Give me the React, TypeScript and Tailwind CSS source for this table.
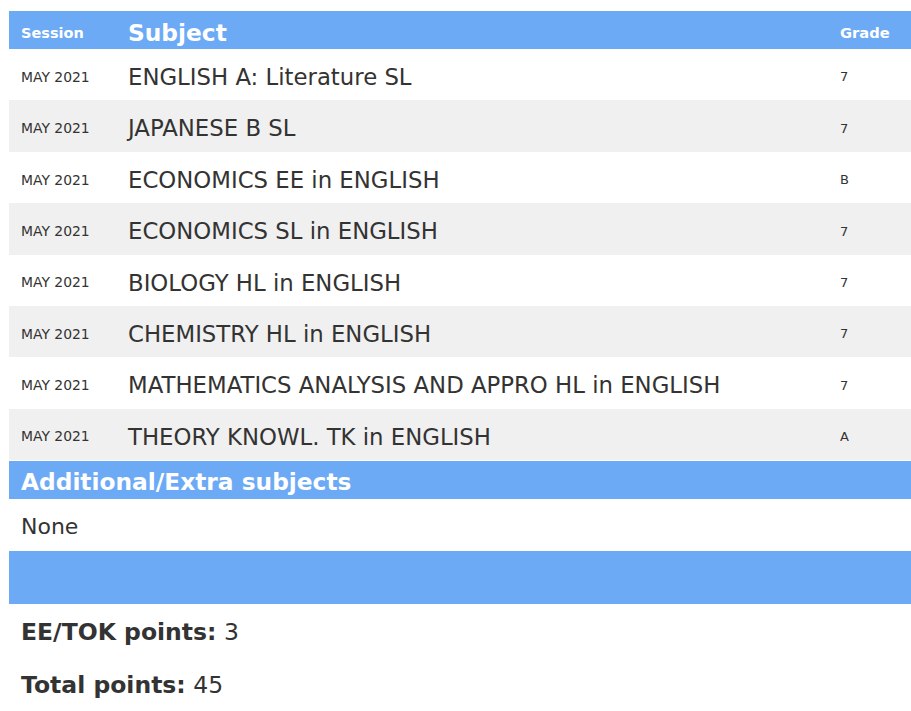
import React from 'react';

interface ResultRow {
    session: string;
    subject: string;
    grade: string;
}

const rows: ResultRow[] = [
    { session: 'MAY 2021', subject: 'ENGLISH A: Literature SL', grade: '7' },
    { session: 'MAY 2021', subject: 'JAPANESE B SL', grade: '7' },
    { session: 'MAY 2021', subject: 'ECONOMICS EE in ENGLISH', grade: 'B' },
    { session: 'MAY 2021', subject: 'ECONOMICS SL in ENGLISH', grade: '7' },
    { session: 'MAY 2021', subject: 'BIOLOGY HL in ENGLISH', grade: '7' },
    { session: 'MAY 2021', subject: 'CHEMISTRY HL in ENGLISH', grade: '7' },
    { session: 'MAY 2021', subject: 'MATHEMATICS ANALYSIS AND APPRO HL in ENGLISH', grade: '7' },
    { session: 'MAY 2021', subject: 'THEORY KNOWL. TK in ENGLISH', grade: 'A' },
];

const App: React.FC = () => {
    return (
        <div className="min-h-[711px] w-[911px] overflow-hidden bg-white pl-[9px] pt-[11px] text-[#333] [font-family:'DejaVu_Sans',Verdana,sans-serif]">
            <div className="w-[910px]">
                {/* results table */}
                <div className="grid h-[38px] grid-cols-[107px_712px_1fr] items-center bg-[#6daaf5] pt-[5px] text-white">
                    <div className="pl-3 text-[14.5px] font-bold">Session</div>
                    <div className="pl-3 text-[23.3px] font-bold">Subject</div>
                    <div className="pl-3 text-[14.7px] font-bold">Grade</div>
                </div>
                {rows.map((row, i) => (
                    <div
                        key={row.subject}
                        className={`grid h-[51.375px] grid-cols-[107px_712px_1fr] items-center pt-[5px] ${i % 2 === 1 ? 'bg-[#f0f0f0]' : 'bg-white'}`}
                    >
                        <div className="pl-3 text-[13.9px]">{row.session}</div>
                        <div className="pl-3 text-[22.8px] whitespace-nowrap">{row.subject}</div>
                        <div className="pl-3 text-[13px]">{row.grade}</div>
                    </div>
                ))}

                <div className="mt-px flex h-[38px] items-center bg-[#6daaf5] pl-3 pt-[4px] text-[23.3px] font-bold text-white">
                    Additional/Extra subjects
                </div>
                <div className="flex h-[52px] items-center pl-3 pt-[2px] text-[22px]">None</div>
                <div className="h-[53px] bg-[#6daaf5]" />

                <div className="pl-3 pt-[14px]">
                    <p className="flex h-[30px] items-center text-[23.5px]">
                        <span className="font-bold">EE/TOK points:</span>&nbsp;3
                    </p>
                    <p className="mt-[23px] flex h-[30px] items-center text-[23.5px]">
                        <span className="font-bold">Total points:</span>&nbsp;45
                    </p>
                </div>
            </div>
        </div>
    );
};

export default App;
